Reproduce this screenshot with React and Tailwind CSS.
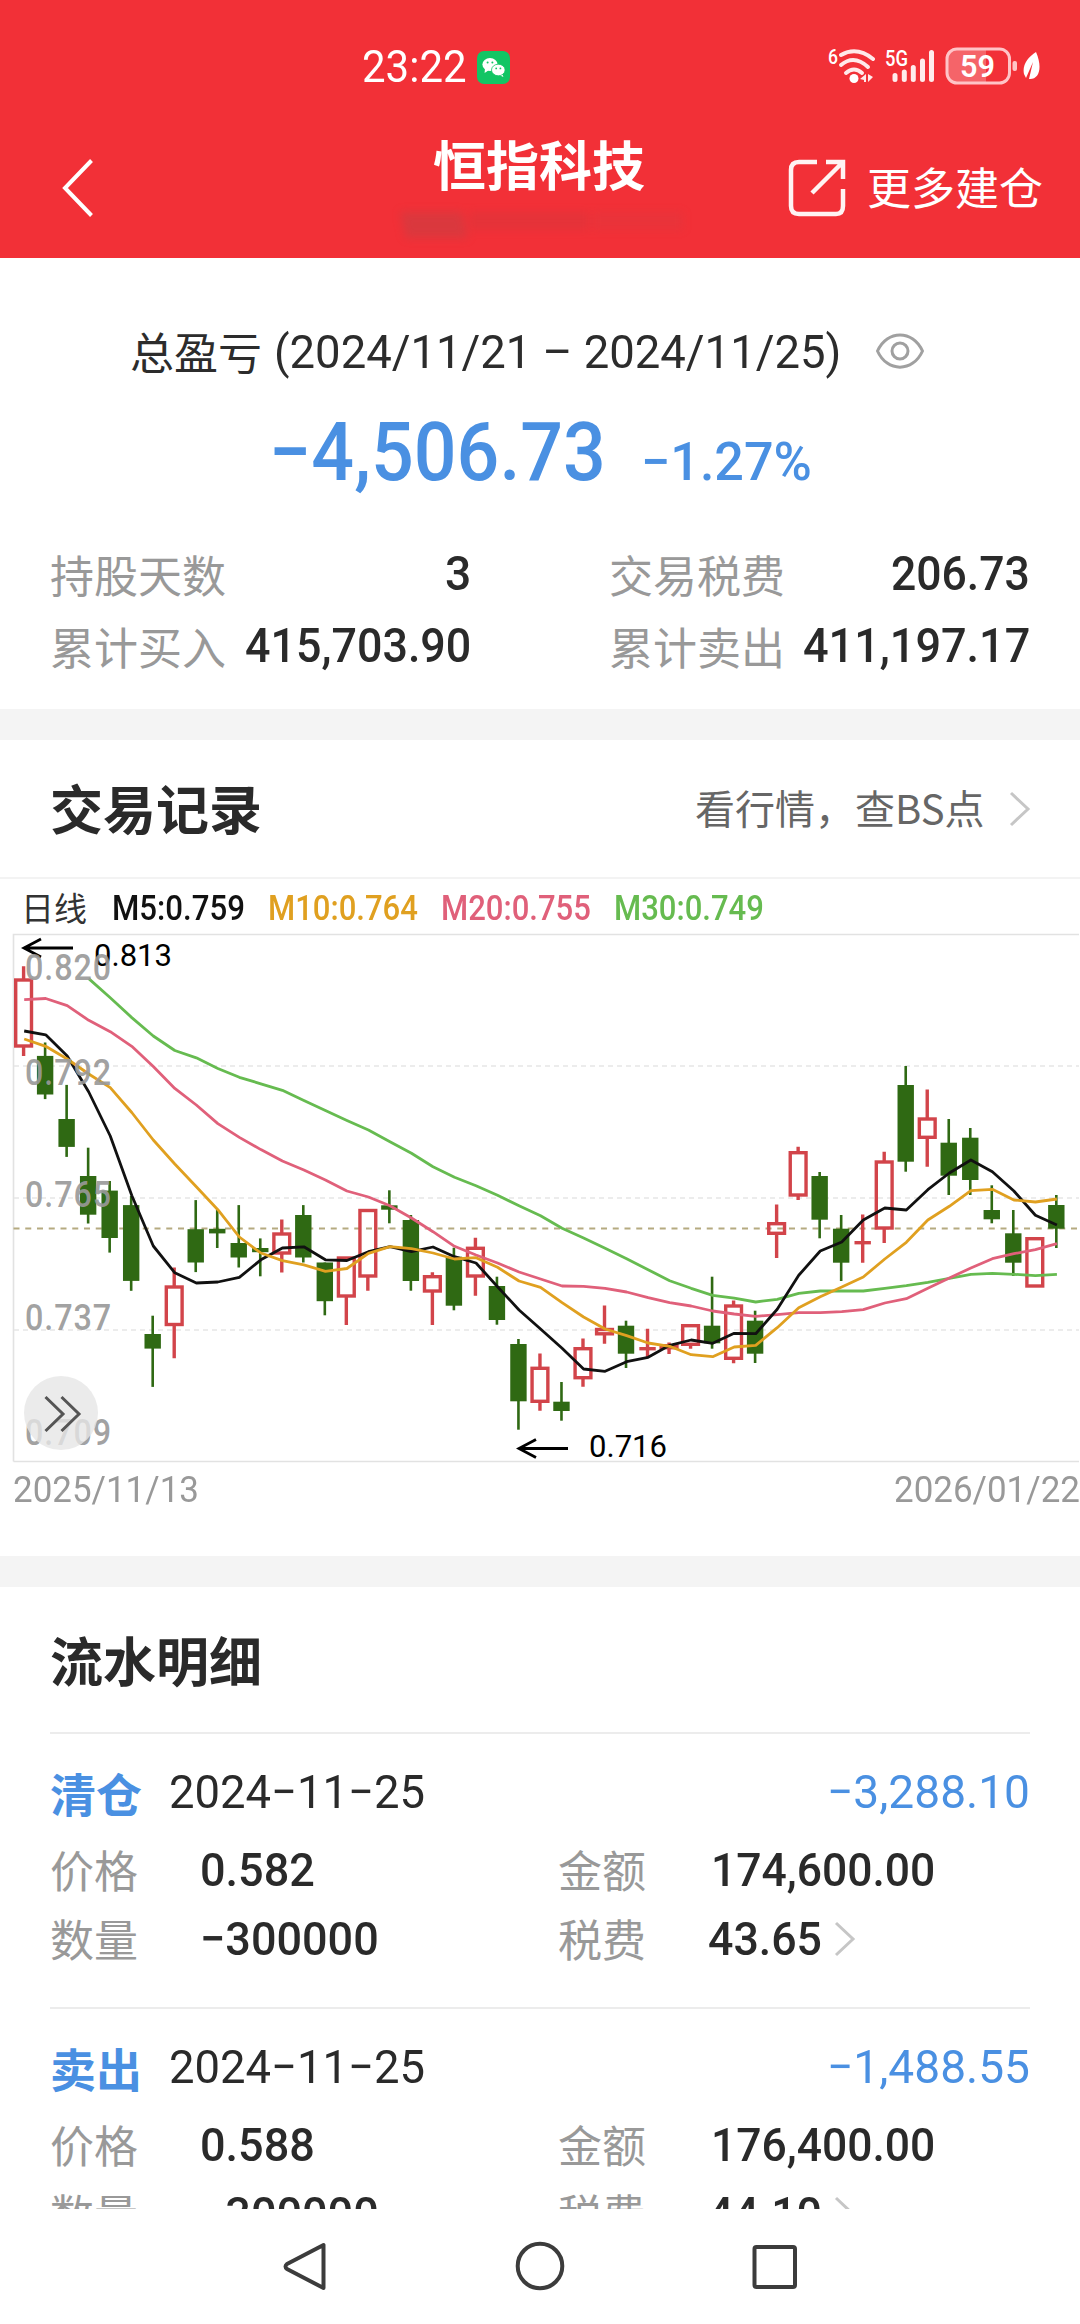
import { useLayoutEffect, useRef } from "react";

const NUM = "font-[Roboto,'Noto_Sans_CJK_SC',sans-serif]";
const CJK = "font-['Noto_Sans_CJK_SC',sans-serif]";

/* Text condensed horizontally so that it fills exactly `w` pixels. */
function Fit({ w, className = "", children }) {
  const ref = useRef(null);
  useLayoutEffect(() => {
    const el = ref.current;
    el.style.transform = `scaleX(${w / el.offsetWidth})`;
  }, [w, children]);
  return (
    <span className={`inline-block shrink-0 whitespace-nowrap ${className}`} style={{ width: w }}>
      <span ref={ref} className="inline-block origin-left">
        {children}
      </span>
    </span>
  );
}

function Chevron({ className = "" }) {
  return (
    <svg width="22" height="36" viewBox="0 0 22 36" fill="none" className={`shrink-0 ${className}`}>
      <path d="M2 2 L19 18 L2 34" stroke="#c6c6c6" strokeWidth="3" />
    </svg>
  );
}

function StatusBar() {
  return (
    <div className="flex h-[44px] items-center text-white">
      <Fit w={105} className={`${NUM} ml-[362px] text-[44px] font-[450] leading-[44px]`}>23:22</Fit>
      <svg width="33" height="33" viewBox="0 0 33 33" className="ml-[10px]">
        <rect width="33" height="33" rx="7" fill="#12c564" />
        <ellipse cx="13" cy="13.5" rx="7.6" ry="6.4" fill="#fff" />
        <path d="M8 17 L7.6 22 L12 19Z M25 22 L26.4 26 L22 24Z" fill="#fff" />
        <ellipse cx="21.3" cy="19" rx="6.8" ry="5.8" fill="#fff" stroke="#12c564" strokeWidth="0.8" />
        <g fill="#12c564">
          <circle cx="10.6" cy="11.6" r="1" />
          <circle cx="15.4" cy="11.6" r="1" />
          <circle cx="19.2" cy="17.4" r="0.9" />
          <circle cx="23.4" cy="17.4" r="0.9" />
        </g>
      </svg>
      <svg width="216" height="44" viewBox="826 45 216 44" className="ml-[316px]" fill="none">
        <text x="828" y="64" fontSize="20" fontFamily="Roboto" fontWeight="500" fill="#fff" textLength="10" lengthAdjust="spacingAndGlyphs">6</text>
        <g stroke="#ffe9ea" strokeWidth="4" strokeLinecap="round">
          <path d="M841 55 Q857 46 873 59" />
          <path d="M841 65 Q854 54 868 67" />
          <path d="M846 73 Q854 66 862 73" />
        </g>
        <circle cx="854" cy="78.5" r="4.5" fill="#fff" />
        <path d="M860 79 L866 74 V82 H864 V80Z M868 74 L873 77 L868 82Z" fill="#ffe9ea" />
        <text x="885" y="65.500" fontSize="22" fontFamily="Roboto" fontWeight="500" fill="#fff" textLength="23" lengthAdjust="spacingAndGlyphs">5G</text>
        <g stroke="#ffecec" strokeWidth="5" strokeLinecap="round">
          <path d="M895 75.5 V79.5 M904.3 72 V79.5 M913.3 67.5 V79.5 M922.5 61 V79.5 M931.5 52.5 V79.5" />
        </g>
        <path d="M958 48 H986 V83 H958 Q946 83 946 73 V58 Q946 48 958 48Z" fill="#fff" fillOpacity="0.25" />
        <rect x="947" y="49" width="62.5" height="34" rx="10" stroke="#ffc4c7" strokeWidth="3" />
        <text x="960" y="77" fontSize="32" fontFamily="Roboto" fontWeight="600" fill="#fff" textLength="35" lengthAdjust="spacingAndGlyphs">59</text>
        <rect x="1012.5" y="61" width="4.5" height="10" rx="2" fill="#ffc4c7" />
        <path d="M1036 52 C1028 57 1022 65 1024 74 L1026 78 L1033 62 L1029 79 C1039 80 1043 68 1036 52Z" fill="#fff" />
      </svg>
    </div>
  );
}

function Header() {
  return (
    <header className="h-[258px] shrink-0 bg-[#f23037] pt-[45px] text-white">
      <StatusBar />
      <div className="flex h-[169px] items-start">
        <svg width="36" height="60" viewBox="0 0 36 60" fill="none" className="ml-[60px] mt-[69px]">
          <path d="M31.500 2.500 L5 30 L31.500 57.500" stroke="#fff" strokeWidth="4" />
        </svg>
        <div className="ml-[301px] mt-[43px] w-[290px]">
          <div className={`${CJK} ml-[36px] text-[53px] font-bold leading-[62px]`}>恒指科技</div>
          <div className="ml-[6px] mt-[18px] flex h-[24px] gap-1 blur-[4px]">
            <div className="h-[26px] w-[62px] skew-x-12 bg-[#b0484a]/35" />
            <div className="h-[18px] w-[120px] bg-[#c03c40]/25" />
            <div className="h-[18px] w-[90px] bg-[#c84046]/20" />
          </div>
        </div>
        <svg width="60" height="60" viewBox="0 0 60 60" fill="none" className="ml-[100px] mt-[69px]" stroke="#fff3f3" strokeWidth="4.5">
          <path d="M30 4 H12 Q4 4 4 12 V48 Q4 56 12 56 H49 Q56 56 56 48 V31" />
          <path d="M39 4 H56 V21 M56 4 L25 35" />
        </svg>
        <div className={`${CJK} ml-[20px] mt-[67px] text-[44px] leading-[60px]`}>更多建仓</div>
      </div>
    </header>
  );
}

function Stat({ label, value, w, className = "" }) {
  return (
    <div className={`flex items-center justify-between ${className}`}>
      <span className={`${CJK} text-[44px] leading-[72px] text-[#999]`}>{label}</span>
      <Fit w={w} className={`${NUM} text-[48px] font-medium leading-[72px] text-[#2a2a2a]`}>{value}</Fit>
    </div>
  );
}

function Summary() {
  return (
    <section className="flex h-[451px] shrink-0 flex-col bg-white">
      <div className="mt-[64px] flex h-[60px] items-center text-[#2c2c2c]">
        <span className={`${CJK} -mt-[3px] ml-[130px] w-[132px] text-[44px] leading-[60px]`}>总盈亏</span>
        <Fit w={567} className={`${NUM} ml-[12px] text-[46px] leading-[60px]`}>(2024/11/21 – 2024/11/25)</Fit>
        <svg width="50" height="38" viewBox="0 0 50 38" fill="none" className="-mt-[2px] ml-[34px]" stroke="#a0a0a0" strokeWidth="3">
          <path d="M2.500 19 C12 -2.500 38 -2.500 47.500 19 C38 40.500 12 40.500 2.500 19Z" />
          <circle cx="25" cy="19" r="8" />
        </svg>
      </div>
      <div className="mt-[20px] flex h-[100px] items-baseline font-medium text-[#4a90e2]">
        <Fit w={337} className={`${NUM} ml-[269px] text-[82px] leading-[100px]`}>−4,506.73</Fit>
        <Fit w={171} className={`${NUM} ml-[35px] text-[53px]`}>−1.27%</Fit>
      </div>
      <div className="mt-[36px] grid grid-cols-[421px_421px] gap-x-[138px] pl-[50px]">
        <Stat label="持股天数" value="3" w={26} />
        <Stat label="交易税费" value="206.73" w={139} />
        <Stat label="累计买入" value="415,703.90" w={226} />
        <Stat label="累计卖出" value="411,197.17" w={227} />
      </div>
    </section>
  );
}

/* [rising, high, body top, body bottom, low] in chart units */
const CANDLES = [
  [1, 966.7, 980, 1046, 1055.9], [0, 1042.5, 1055.9, 1094.5, 1099.1], [0, 1084.9, 1119, 1146.9, 1156.9],
  [0, 1147.7, 1176, 1214.7, 1223.5], [0, 1181, 1190.6, 1238, 1252.6], [0, 1196, 1205.1, 1280.9, 1290.8],
  [0, 1315.7, 1334, 1348.6, 1386.9], [1, 1267.9, 1287, 1324.5, 1358.2], [0, 1200.1, 1229.2, 1262.5, 1272.1],
  [0, 1209.7, 1228.8, 1233.4, 1248], [0, 1205.1, 1243, 1257.5, 1267.5], [0, 1238.4, 1248, 1252.2, 1276.3],
  [1, 1220, 1234, 1253, 1272.5], [0, 1205.1, 1215, 1257.5, 1262.5], [0, 1262.5, 1262.5, 1301.2, 1315.3],
  [1, 1257.5, 1258, 1296, 1325], [1, 1210, 1210.5, 1276, 1290.7], [0, 1190.3, 1205.3, 1209.7, 1223.3],
  [0, 1215, 1220, 1281, 1290.7], [1, 1272.7, 1276.7, 1291, 1325], [0, 1247.7, 1256.7, 1305.7, 1310.3],
  [1, 1238.3, 1248.3, 1276, 1295.7], [0, 1276.7, 1286, 1320, 1324.7], [0, 1339, 1344, 1401.3, 1429.7],
  [1, 1354, 1368.3, 1401.3, 1410.7], [0, 1382, 1401.7, 1411, 1420.7], [1, 1339, 1348.7, 1377.7, 1386.7],
  [1, 1306, 1329.5, 1333.8, 1343.7], [0, 1320.7, 1325.7, 1353.7, 1368], [1, 1329.3, 1348.7, 1348.7, 1357.3],
  [1, 1343, 1345.7, 1347.7, 1354], [1, 1325, 1325.7, 1344.3, 1348.7], [0, 1276.7, 1325.7, 1343.3, 1348.7],
  [1, 1301, 1306, 1358.3, 1363.3], [0, 1310.7, 1320.7, 1353.7, 1363], [1, 1205, 1223.7, 1233.3, 1258],
  [1, 1147.3, 1152.7, 1195, 1200], [0, 1172, 1176, 1219.7, 1238.3], [0, 1215, 1228.7, 1262.7, 1281],
  [1, 1215, 1242.7, 1242.7, 1262.7], [1, 1152.3, 1162, 1228, 1243], [0, 1066, 1085, 1161.7, 1171.7],
  [1, 1090, 1119, 1137.3, 1166.7], [0, 1119, 1142.7, 1175.7, 1195], [0, 1128, 1137.7, 1180, 1195],
  [0, 1185.3, 1210, 1219.3, 1223.3], [0, 1210, 1233.3, 1262.7, 1276], [1, 1238.7, 1238.7, 1286, 1286],
  [0, 1195, 1205, 1228.7, 1248],
];

const AVERAGES = [
  {
    color: "#66bb50",
    from: 3,
    ys: [978.6, 997.7, 1017.6, 1036, 1050.5, 1057.8, 1068.5, 1077.3, 1083.8, 1090.3, 1100.6, 1110.6, 1120.5, 1130, 1141.7, 1153.3, 1166.7, 1177.3, 1185.7, 1195.3, 1205.7, 1215.7, 1228.3, 1238, 1248.3, 1258.7, 1269.7, 1280.7, 1288.3, 1295.3, 1298.2, 1302, 1299.3, 1293.3, 1291, 1291, 1291, 1288.3, 1285.7, 1282.3, 1278.3, 1274.3, 1273.3, 1274.3, 1275.7, 1274.3],
  },
  {
    color: "#e0607a",
    from: 0,
    ys: [999.6, 998.5, 1005.7, 1020.3, 1031.7, 1046.3, 1066.6, 1088.4, 1105, 1123.6, 1137.4, 1149.6, 1161, 1170, 1179.9, 1191, 1197, 1205.7, 1218, 1231.7, 1246.3, 1255, 1263, 1272, 1279, 1286, 1286.3, 1288.3, 1292, 1297.7, 1302.7, 1306, 1311, 1314, 1316.3, 1314.7, 1312.7, 1312.7, 1311.7, 1309.7, 1303, 1298.7, 1288.3, 1278, 1268, 1258.7, 1253.7, 1249.7, 1243.7],
  },
  {
    color: "#111111",
    from: 0,
    ys: [1031, 1034.8, 1056, 1092, 1136, 1195.5, 1246, 1272.8, 1283, 1282, 1277.4, 1259.8, 1248, 1246.8, 1259.8, 1260.5, 1251.7, 1246.7, 1251.7, 1247, 1256.7, 1263, 1286.7, 1310, 1329, 1348.3, 1369, 1371.3, 1361.7, 1357.3, 1345.3, 1340, 1343.3, 1333.3, 1333.7, 1309.3, 1275.3, 1251, 1242, 1220, 1208, 1210, 1189.7, 1173, 1160, 1171.7, 1191, 1215.3, 1225],
  },
  {
    color: "#e0a020",
    from: 0,
    ys: [1039, 1046.3, 1059, 1074, 1087.6, 1112.5, 1140, 1164, 1186.7, 1209.7, 1237, 1253, 1260.6, 1264.8, 1271.3, 1268.5, 1253.3, 1246.7, 1248.7, 1253, 1259, 1257.7, 1267.3, 1281, 1287.3, 1302.7, 1317, 1329, 1335.7, 1343, 1346.3, 1354.7, 1356.7, 1347, 1345.3, 1327.7, 1307.7, 1296.7, 1287, 1277, 1259, 1242.3, 1220, 1206.3, 1190.7, 1189.3, 1200, 1202, 1199],
  },
];

const AXIS = [["0.820", 979.5], ["0.792", 1084.5], ["0.765", 1207], ["0.737", 1330], ["0.709", 1444.5]];
const xAt = (i) => 23.6 + i * 21.515;

function Candle({ index, data }) {
  const [up, high, top, bottom, low] = data;
  const x = xAt(index);
  if (up) {
    return (
      <g stroke="#d2444a" strokeWidth="3.4" fill="none">
        <path d={`M${x} ${high - 0.5} V${top} M${x} ${bottom} V${low}`} />
        {bottom - top < 1 ? <path d={`M${x - 8.2} ${top} H${x + 8.2}`} /> : <rect x={x - 7.9} y={top} width="15.8" height={bottom - top} />}
      </g>
    );
  }
  return (
    <g fill="#2f6913">
      <rect x={x - 1.3} y={high} width="2.6" height={low - high} />
      <rect x={x - 8.2} y={top} width="16.4" height={bottom - top} />
    </g>
  );
}

function CandleChart() {
  return (
    <svg width="1080" height="532" viewBox="0 931 1080 532" fill="none" className="block">
      <path d="M13.500 1461.500 V934.500 H1079" stroke="#e2e2e2" strokeWidth="1.6" />
      <path d="M13.500 1461.500 H1079" stroke="#e2e2e2" strokeWidth="1.6" />
      <path d="M14 1066 H1079 M14 1198 H1079 M14 1330 H1079" stroke="#e6e6e6" strokeWidth="1.4" strokeDasharray="5 4" />
      <path d="M13.500 1228.600 H1079" stroke="#b5aa80" strokeWidth="2" strokeDasharray="6 5.750" />
      {CANDLES.map((c, i) => (
        <Candle key={i} index={i} data={c} />
      ))}
      {AVERAGES.map((a) => (
        <polyline key={a.color} points={a.ys.map((y, i) => `${xAt(i + a.from) + 0.6},${y}`).join(" ")} stroke={a.color} strokeWidth="2.8" strokeLinejoin="round" />
      ))}
      <g stroke="#000" strokeWidth="2.8">
        <path d="M24 948 H73 M41 939 L24 948 L41 957" />
        <path d="M519 1448.500 H568 M536 1439.500 L519 1448.500 L536 1457.500" />
      </g>
      <g className={NUM} fontSize="32" fill="#000">
        <text x="94" y="966" textLength="78" lengthAdjust="spacingAndGlyphs">0.813</text>
        <text x="589" y="1456.500" textLength="78" lengthAdjust="spacingAndGlyphs">0.716</text>
      </g>
      <g className={NUM} fontSize="36" fontWeight="500" fill="#999" fillOpacity="0.92" letterSpacing="1">
        {AXIS.map(([label, y]) => (
          <text key={label} x="25" y={y} textLength="87" lengthAdjust="spacingAndGlyphs">{label}</text>
        ))}
      </g>
      <circle cx="61" cy="1413" r="37" fill="#e6e6e6" fillOpacity="0.8" />
      <path d="M45.500 1397 L63 1414 L45.500 1431 M61.500 1397 L79 1414 L61.500 1431" stroke="#555" strokeWidth="3" />
    </svg>
  );
}

function TradeRecord() {
  return (
    <section className="h-[816px] shrink-0 bg-white">
      <div className="flex h-[137px] items-center">
        <h2 className={`${CJK} -mt-[4px] ml-[50px] text-[53px] font-bold leading-[60px] text-[#2a2a2a]`}>交易记录</h2>
        <Fit w={290} className={`${CJK} -mt-[3px] ml-auto text-[40px] leading-[60px] text-[#666]`}>看行情，查BS点</Fit>
        <Chevron className="ml-[24px] mr-[49px]" />
      </div>
      <div className={`${NUM} flex h-[54px] items-center border-t-2 border-[#f3f3f3] pt-[8px] text-[35px] font-medium leading-[46px]`}>
        <span className={`${CJK} -mt-[5px] ml-[21px] w-[67px] text-[33px] font-normal text-[#333]`}>日线</span>
        <Fit w={133} className="ml-[24px] text-[#111]">M5:0.759</Fit>
        <Fit w={150} className="ml-[23px] text-[#e0a020]">M10:0.764</Fit>
        <Fit w={150} className="ml-[23px] text-[#e0607a]">M20:0.755</Fit>
        <Fit w={150} className="ml-[23px] text-[#66bb50]">M30:0.749</Fit>
      </div>
      <CandleChart />
      <div className={`${NUM} flex h-[54px] items-center justify-between pl-[13px] text-[37px] font-[450] leading-[54px] text-[#999]`}>
        <Fit w={186}>2025/11/13</Fit>
        <Fit w={186}>2026/01/22</Fit>
      </div>
    </section>
  );
}

function Field({ label, value, w, gap, link }) {
  return (
    <div className="flex items-center">
      <span className={`${CJK} text-[44px] leading-[69px] text-[#999]`}>{label}</span>
      <Fit w={w} className={`${NUM} text-[47px] font-medium leading-[69px] text-[#2a2a2a] ${gap}`}>{value}</Fit>
      {link && <Chevron className="ml-[12px]" />}
    </div>
  );
}

function Entry({ kind, date, amount, price, total, count, tax }) {
  return (
    <article className="ml-[50px] mr-[50px] h-[275px] border-t-2 border-[#ececec] pt-[22px]">
      <div className="flex h-[72px] items-center">
        <span className={`${CJK} text-[46px] font-bold leading-[72px] text-[#4a90e2]`}>{kind}</span>
        <Fit w={256} className={`${NUM} ml-[27px] text-[47px] font-[450] leading-[72px] text-[#2a2a2a]`}>{date}</Fit>
        <Fit w={203} className={`${NUM} ml-auto text-[47px] font-[450] leading-[72px] text-[#4a90e2]`}>{amount}</Fit>
      </div>
      <div className="mt-[7px] grid grid-cols-[508px_1fr]">
        <Field label="价格" value={price} w={115} gap="ml-[62px]" />
        <Field label="金额" value={total} w={224} gap="ml-[65px]" />
        <Field label="数量" value={count} w={179} gap="ml-[62px]" />
        <Field label="税费" value={tax} w={114} gap="ml-[62px]" link />
      </div>
    </article>
  );
}

function Details() {
  return (
    <section className="h-[622px] shrink-0 overflow-hidden bg-white">
      <h2 className={`${CJK} ml-[50px] h-[145px] pt-[42px] text-[53px] font-bold leading-[60px] text-[#2a2a2a]`}>流水明细</h2>
      <Entry kind="清仓" date="2024−11−25" amount="−3,288.10" price="0.582" total="174,600.00" count="−300000" tax="43.65" />
      <Entry kind="卖出" date="2024−11−25" amount="−1,488.55" price="0.588" total="176,400.00" count="−300000" tax="44.10" />
    </section>
  );
}

function SystemNav() {
  return (
    <nav className="flex h-[115px] shrink-0 items-start bg-white pt-[32px]">
      <svg width="52" height="52" viewBox="0 0 52 52" fill="none" className="ml-[279px]" stroke="#3c3c3c" strokeWidth="4" strokeLinejoin="round">
        <path d="M44.500 4 V47 L8 28 Q5 25.500 8 23 Z" />
      </svg>
      <svg width="52" height="52" viewBox="0 0 52 52" fill="none" className="ml-[183px]" stroke="#3c3c3c" strokeWidth="4">
        <circle cx="26" cy="25" r="22.300" />
      </svg>
      <svg width="52" height="52" viewBox="0 0 52 52" fill="none" className="ml-[183px]" stroke="#3c3c3c" strokeWidth="4">
        <rect x="5.500" y="6" width="40.500" height="40" rx="2" />
      </svg>
    </nav>
  );
}

export default function App() {
  return (
    <div className="flex h-[2324px] w-[1080px] flex-col overflow-hidden bg-white">
      <Header />
      <Summary />
      <div className="h-[31px] shrink-0 bg-[#f4f4f4]" />
      <TradeRecord />
      <div className="h-[31px] shrink-0 bg-[#f4f4f4]" />
      <Details />
      <SystemNav />
    </div>
  );
}
